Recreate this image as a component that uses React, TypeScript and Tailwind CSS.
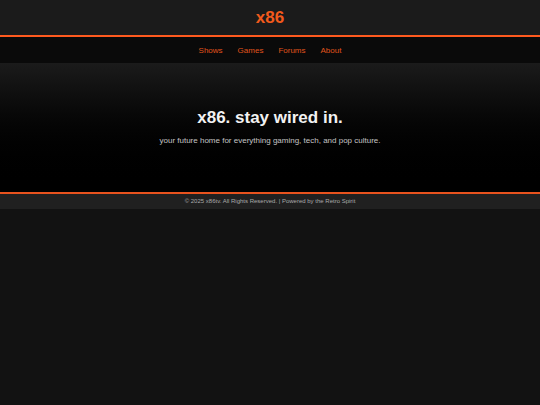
export default function App() {
  return (
    <div className="min-h-[405px] bg-[#121212] font-['Liberation_Sans',Arial,sans-serif]">
      <header className="h-[37px] bg-[#1b1b1b] border-b-2 border-[#ff5a1f] shadow-[0_2px_4px_rgba(200,20,0,0.7)] flex items-center justify-center">
        <h1 className="text-[17px] font-bold text-[#f25a1c] leading-none">x86</h1>
      </header>
      <nav className="h-[26px] bg-[#0a0a0a] flex items-center justify-center gap-[15px] pt-[1px] text-[8px] text-[#e0541c]">
        <a>Shows</a>
        <a>Games</a>
        <a>Forums</a>
        <a>About</a>
      </nav>
      <section className="h-[129px] bg-gradient-to-b from-[#1b1b1b] to-[#000000] flex flex-col items-center justify-center">
        <h2 className="text-[17px] font-bold text-[#f2f2f2] leading-none">x86. stay wired in.</h2>
        <p className="mt-[9px] text-[8px] text-[#c4c4c4]">your future home for everything gaming, tech, and pop culture.</p>
      </section>
      <footer className="h-[17px] bg-[#202020] border-t-2 border-[#e8531e] flex items-center justify-center text-[6px] text-[#aaaaaa]">
        © 2025 x86tv. All Rights Reserved. | Powered by the Retro Spirit
      </footer>
    </div>
  );
}
